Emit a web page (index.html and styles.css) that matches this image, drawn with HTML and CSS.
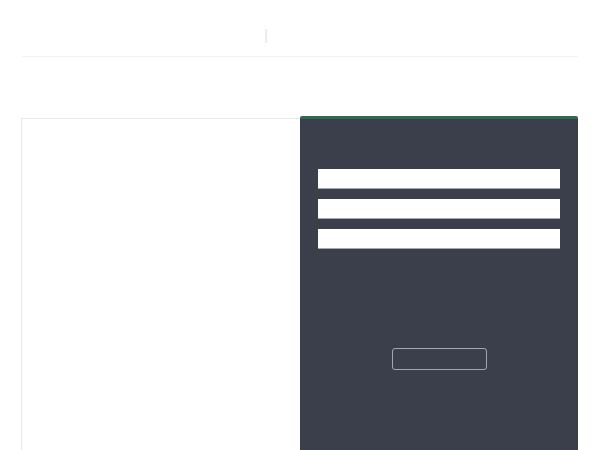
FILE: index.html
```html
<!DOCTYPE html>
<html>
<head>
<meta charset="utf-8">
<link rel="stylesheet" href="styles.css">
</head>
<body>
<div class="page">
  <header class="topbar">
    <span class="divider"></span>
  </header>
  <main class="card">
    <section class="info"></section>
    <section class="login">
      <form class="form">
        <input class="field" type="text" aria-label="Name">
        <input class="field" type="text" aria-label="Email">
        <input class="field" type="password" aria-label="Password">
        <button class="submit" type="button"></button>
      </form>
    </section>
  </main>
</div>
</body>
</html>
```
FILE: styles.css
```css
html, body {
  margin: 0;
  padding: 0;
  background: #ffffff;
  font-family: "Liberation Sans", Arial, sans-serif;
  overflow: hidden;
}
.page {
  width: 557px;
  margin-left: 21px;
}
.topbar {
  height: 56px;
  margin-left: 1px;
  border-bottom: 1px solid #f2f2f2;
  display: flex;
  align-items: flex-start;
}
.divider {
  display: block;
  width: 2px;
  height: 14px;
  margin-top: 29px;
  margin-left: 243px;
  background: #ececec;
}
.card {
  margin-top: 59px;
  display: flex;
  align-items: flex-start;
}
.info {
  width: 278px;
  height: 332px;
  margin-top: 2px;
  border: 1px solid #e8e8e8;
  border-right: none;
  border-bottom: none;
  background: #ffffff;
}
.login {
  width: 278px;
  height: 334px;
  background: #3a3f4b;
  border-top: 3px solid #2e6b4f;
  border-radius: 2px 2px 0 0;
  box-sizing: border-box;
  padding: 50px 18px 0;
}
.form {
  display: flex;
  flex-direction: column;
  align-items: center;
  gap: 10px;
  margin: 0;
}
.field {
  display: block;
  width: 100%;
  height: 20px;
  box-sizing: border-box;
  margin: 0;
  padding: 0;
  border: none;
  border-bottom: 1px solid #a4a8b0;
  background: #ffffff;
  outline: none;
}
.submit {
  width: 95px;
  height: 22px;
  margin-top: 89px;
  padding: 0;
  box-sizing: border-box;
  background: transparent;
  border: 1px solid #a3a7b0;
  border-radius: 3px;
}
```
